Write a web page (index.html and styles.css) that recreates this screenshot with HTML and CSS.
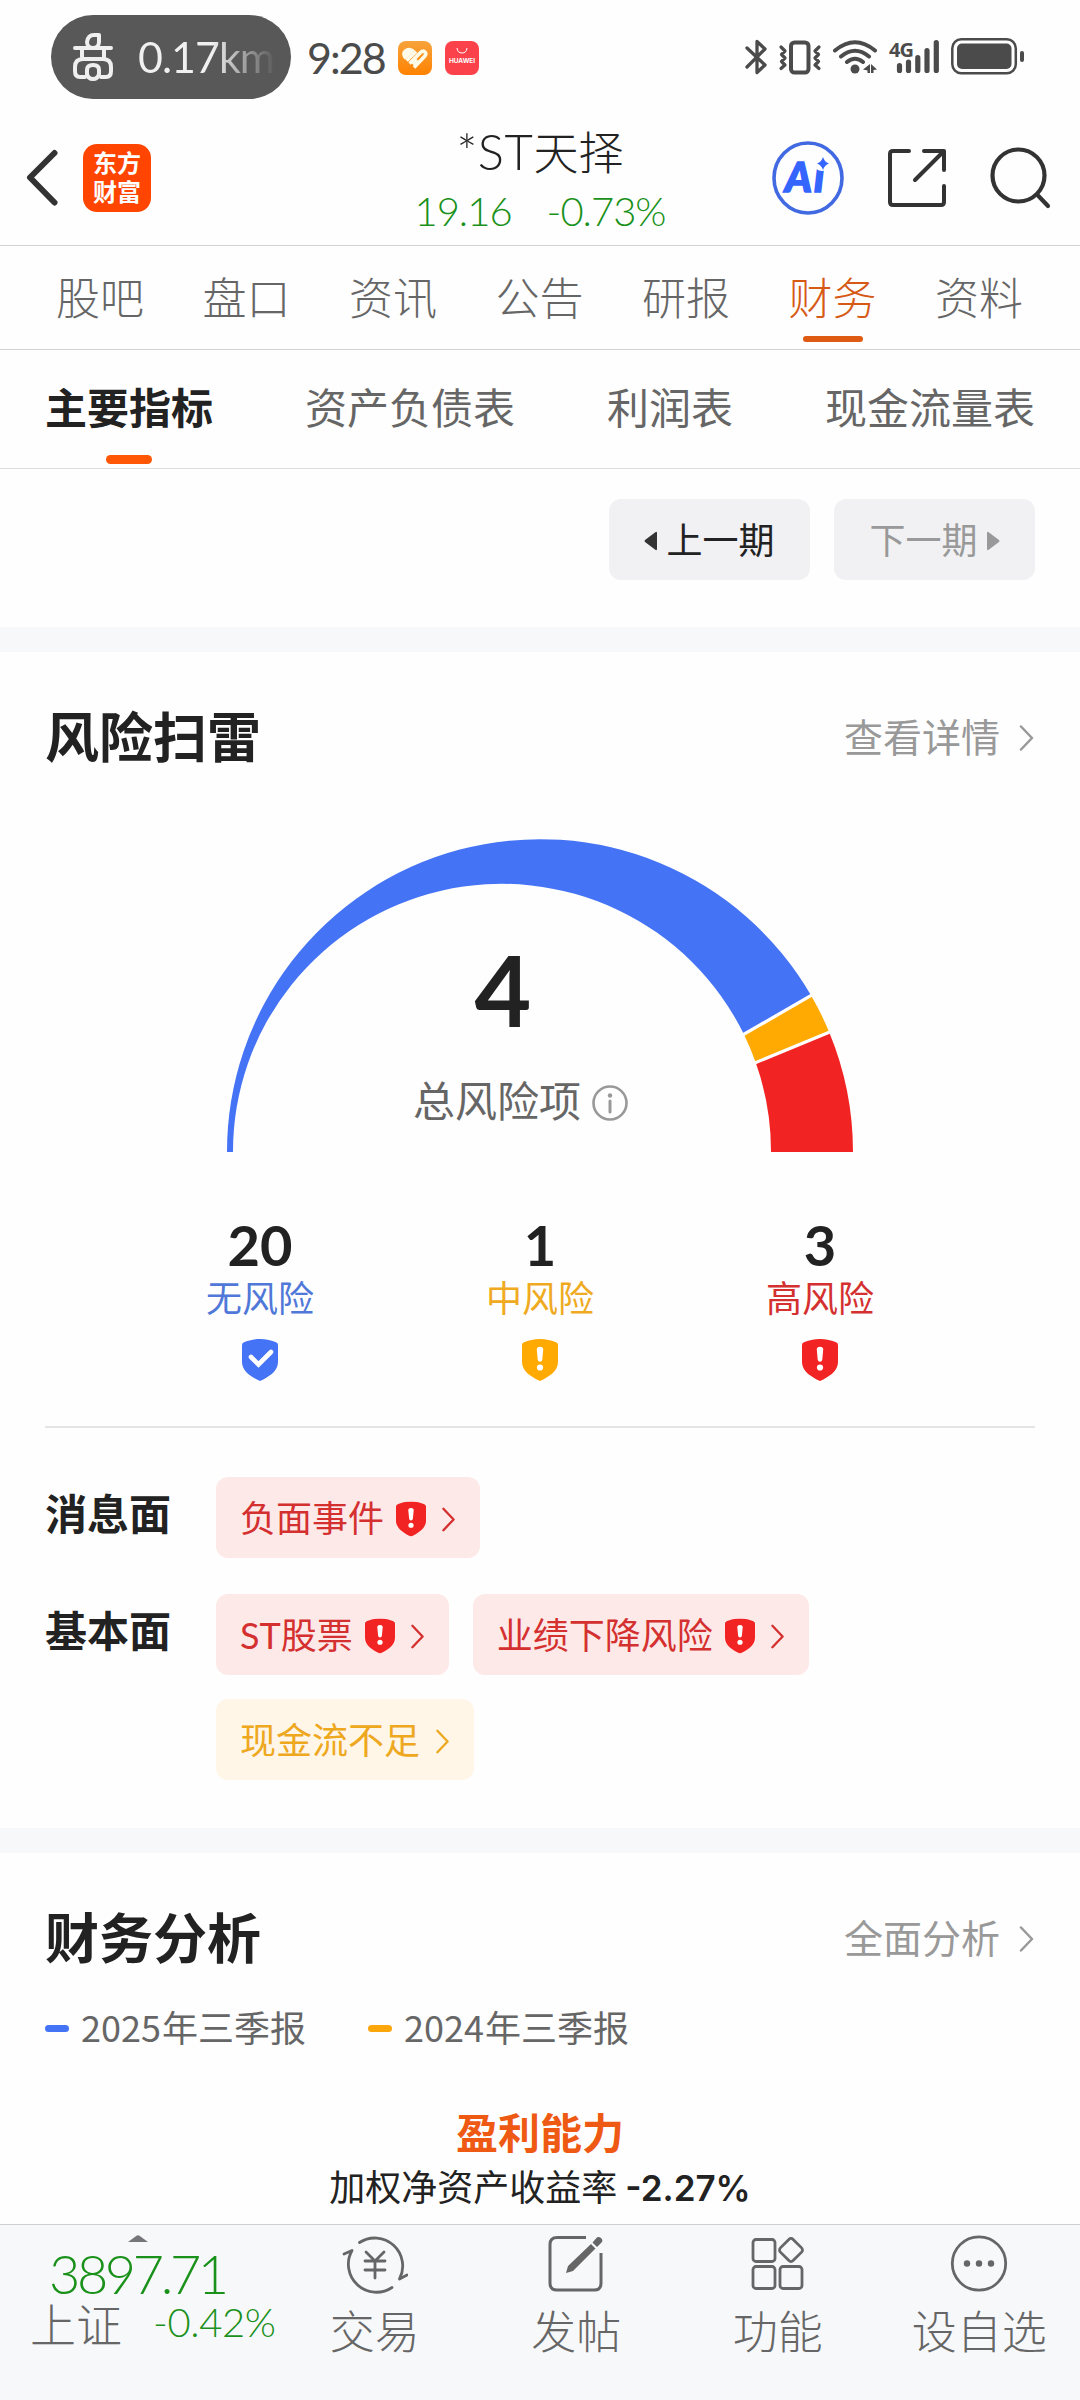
FILE: index.html
```html
<!DOCTYPE html>
<html lang="zh-CN">
<head>
<meta charset="utf-8">
<title>*ST天择 财务</title>
<link rel="stylesheet" href="styles.css">
</head>
<body>
<svg class="defs" width="0" height="0" aria-hidden="true">
  <symbol id="shield" viewBox="0 0 36 42"><path fill="currentColor" d="M18 0C24 0 30 1.500 34 3.200Q36 4 36 6V23C36 32 27 38 18 42C9 38 0 32 0 23V6Q0 4 2 3.200C6 1.500 12 0 18 0Z"/></symbol>
  <symbol id="bang" viewBox="0 0 36 42"><use href="#shield"/><path fill="#fff" d="M14.800 10.500Q14.800 7.800 18 7.800Q21.200 7.800 21.200 10.500L20.300 20.500Q20 22.800 18 22.800Q16 22.800 15.700 20.500Z"/><circle cx="18" cy="28.500" r="3.100" fill="#fff"/></symbol>
  <symbol id="arrow" viewBox="0 0 14 26"><path d="M1.500 1.500L12.500 13L1.500 24.500" fill="none" stroke="currentColor" stroke-width="2.500" stroke-linecap="round" stroke-linejoin="round"/></symbol>
</svg>

<header class="status">
  <div class="pill">
    <svg width="40" height="48" viewBox="0 0 40 48" fill="none" stroke="#efefef" stroke-width="4" stroke-linecap="round" stroke-linejoin="round">
      <path d="M14 9Q15 2 21 2H26V9A6 6 0 0 1 14 9ZM2 15H13M27 15H38M9 17V24M31 17V24M13 15H27"/>
      <path d="M12 44H7Q2 44 2 38V34Q2 26 10 26H30Q38 26 38 34V38Q38 44 33 44H28"/>
      <path d="M14 41V37Q14 32 20 32Q26 32 26 37V41Q25 46 20 46Q15 46 14 41Z"/>
    </svg>
    <span class="num distance">0.17km</span>
  </div>
  <span class="num clock">9:28</span>
  <svg class="app-mini" width="34" height="34" viewBox="0 0 34 34"><defs><linearGradient id="og" x2="0" y2="1"><stop stop-color="#f7a33c"/><stop offset="1" stop-color="#ff8200"/></linearGradient></defs><rect width="34" height="34" rx="8" fill="url(#og)"/><path fill="#fffbe9" d="M17 9.500Q13 5.500 8 7.500Q3 10 4.500 15Q5 17 7 18.500Z"/><path d="M8.500 19.500L18 10.500M11.500 22.500L22.500 11.500Q25 9 27 11Q29 13 26.500 15.500L16 26.500M14.500 23L19 18.500" fill="none" stroke="#fffbe9" stroke-width="3.600"/></svg>
  <svg class="app-mini" width="34" height="34" viewBox="0 0 34 34"><rect width="34" height="34" rx="8" fill="#fb414a"/><path d="M12 7Q12.500 12 17 12T22 7" fill="none" stroke="#fff" stroke-width="1"/><text x="17" y="22" text-anchor="middle" textLength="26" class="mini-text">HUAWEI</text></svg>
  <div class="status-right">
    <svg width="280" height="40" viewBox="745 36 280 40" fill="none" stroke="#4b4b4b" stroke-linecap="round" stroke-linejoin="round">
      <path stroke-width="3.300" d="M747 48L765 65L757 72.500V41.500L765 49L747 67"/>
      <rect x="791" y="42.500" width="17.500" height="30" rx="3.500" stroke-width="4"/>
      <path stroke-width="3.200" d="M781 47L785 51L781.500 54.500L785 58L781.500 61.500L785 65L781 68.500M819 47L815 51L818.500 54.500L815 58L818.500 61.500L815 65L819 68.500"/>
      <path stroke-width="4" d="M835 50.500Q855 34 875 50.500M841 56.500Q855 45 869 56.500M847 62Q855 55.500 863 62"/>
      <circle cx="855" cy="69" r="4.500" fill="#4b4b4b" stroke="none"/>
      <path fill="#4b4b4b" stroke="none" d="M863 69.500L870 64V73H867.500V70.500ZM871 64L877 69.500L873.500 70V73H871Z"/>
      <path stroke-width="5.200" d="M899.500 65.500V70.500M908.500 62V70.500M917.800 57.500V70.500M927 50.500V70.500M936.300 42.500V70.500"/>
      <rect x="952.300" y="39.300" width="63.500" height="34" rx="9" stroke-width="2.500"/>
      <rect x="957" y="43.500" width="54.500" height="25.500" rx="5" fill="#4b4b4b" stroke="none"/>
      <rect x="1020" y="51" width="4" height="11" rx="2" fill="#4b4b4b" stroke="none"/>
      <text x="889" y="56.500" class="net-text">4G</text>
    </svg>
  </div>
</header>

<header class="topbar">
  <div class="top-left">
    <svg width="32" height="58" viewBox="0 0 32 58"><path d="M28.500 4L4 28.500L28.500 53.500" fill="none" stroke="#333" stroke-width="6" stroke-linecap="round" stroke-linejoin="round"/></svg>
    <div class="brand">东方<br>财富</div>
  </div>
  <div class="stock">
    <div class="name"><span class="num latin">*ST</span>天择</div>
    <div class="quote num"><span>19.16</span><span>-0.73%</span></div>
  </div>
  <div class="top-right">
    <svg width="72" height="74" viewBox="0 0 72 74"><ellipse cx="36" cy="37" rx="34" ry="35" fill="none" stroke="#4169e1" stroke-width="3.600"/><text x="13" y="51" class="ai-text">Ai</text><circle cx="50" cy="22" r="8" fill="#fefefe"/><path fill="#3565ff" d="M51 16Q52.500 21 57 22.500Q52.500 24 51 29Q49.500 24 45 22.500Q49.500 21 51 16Z"/></svg>
    <svg width="60" height="60" viewBox="0 0 60 60" fill="none" stroke="#333" stroke-width="4" stroke-linecap="round" stroke-linejoin="round"><path d="M22 3H6Q3 3 3 6V54Q3 57 6 57H54Q57 57 57 54V38M37 3H57V22M56 4L28 32"/></svg>
    <svg width="62" height="62" viewBox="0 0 62 62" fill="none" stroke="#333" stroke-width="4.200" stroke-linecap="round"><circle cx="28.500" cy="28.500" r="26"/><path d="M47.500 48L58 59"/></svg>
  </div>
</header>

<nav class="tabs">
  <span>股吧</span><span>盘口</span><span>资讯</span><span>公告</span><span>研报</span><span class="on">财务</span><span>资料</span>
</nav>
<nav class="subtabs">
  <span class="on">主要指标</span><span>资产负债表</span><span>利润表</span><span>现金流量表</span>
</nav>
<div class="pager">
  <button class="prev"><svg width="13" height="20" viewBox="0 0 13 20"><path d="M13 2V18Q13 20 11 18.500L1 11Q0 10 1 9L11 1.500Q13 0 13 2Z" fill="#333"/></svg><span>上一期</span></button>
  <button class="next"><span>下一期</span><svg width="13" height="20" viewBox="0 0 13 20"><path d="M0 2V18Q0 20 2 18.500L12 11Q13 10 12 9L2 1.500Q0 0 0 2Z" fill="#999"/></svg></button>
</div>

<section class="risk">
  <div class="head"><h2>风险扫雷</h2><a>查看详情<svg width="15" height="26"><use href="#arrow"/></svg></a></div>
  <div class="gauge">
    <svg width="630" height="316" viewBox="225 836 630 316">
      <path fill="#4573f5" d="M227 1151A313 312.500 0 0 1 811.100 994.500L743.900 1033.300A269 267.500 0 0 0 233 1151Z"/>
      <path fill="#ffaa02" d="M811.100 994.500A313 313 0 0 1 829.200 1031.200L755.700 1061.600A269 267.500 0 0 0 743.900 1033.300Z"/>
      <path fill="#f22323" d="M829.200 1031.200A313 313 0 0 1 853 1151H771A269 267.500 0 0 0 755.700 1061.600Z"/>
      <path stroke="#fff" stroke-width="3.200" d="M738 1036.700L816 991.700M750 1063.900L834 1029.200"/>
    </svg>
    <div class="gauge-text">
      <div class="total num">4</div>
      <div class="total-label">总风险项<svg width="36" height="36" viewBox="0 0 36 36"><circle cx="18" cy="18" r="16.500" fill="none" stroke="#999" stroke-width="2.600"/><circle cx="18" cy="10.500" r="2.200" fill="#999"/><path d="M18 16V27" stroke="#999" stroke-width="3" stroke-linecap="round"/></svg></div>
    </div>
  </div>
  <div class="counts">
    <div class="count blue"><b class="num">20</b><span>无风险</span><svg width="36" height="42" viewBox="0 0 36 42"><use href="#shield"/><path d="M9 18L16.500 25.500L29 13" fill="none" stroke="#fff" stroke-width="4.600" stroke-linecap="round"/></svg></div>
    <div class="count amber"><b class="num">1</b><span>中风险</span><svg width="36" height="42"><use href="#bang"/></svg></div>
    <div class="count red"><b class="num">3</b><span>高风险</span><svg width="36" height="42"><use href="#bang"/></svg></div>
  </div>
  <div class="factors">
    <div class="factor"><h3>消息面</h3><div class="tags">
      <a class="tag"><span>负面事件</span><svg class="sh" width="30" height="36"><use href="#bang"/></svg><svg class="ar" width="13" height="25"><use href="#arrow"/></svg></a>
    </div></div>
    <div class="factor"><h3>基本面</h3><div class="tags">
      <a class="tag"><span><span class="num">ST</span>股票</span><svg class="sh" width="30" height="36"><use href="#bang"/></svg><svg class="ar" width="13" height="25"><use href="#arrow"/></svg></a>
      <a class="tag"><span>业绩下降风险</span><svg class="sh" width="30" height="36"><use href="#bang"/></svg><svg class="ar" width="13" height="25"><use href="#arrow"/></svg></a>
      <a class="tag warn"><span>现金流不足</span><svg class="ar" width="13" height="25"><use href="#arrow"/></svg></a>
    </div></div>
  </div>
</section>

<section class="analysis">
  <div class="head"><h2>财务分析</h2><a>全面分析<svg width="15" height="26"><use href="#arrow"/></svg></a></div>
  <div class="legend">
    <span class="key blue"><i></i><em>2025</em>年三季报</span>
    <span class="key amber"><i></i><em>2024</em>年三季报</span>
  </div>
  <h4>盈利能力</h4>
  <p>加权净资产收益率 <b>-2.27%</b></p>
</section>

<footer class="dock">
  <div class="index">
    <svg width="20" height="7" viewBox="0 0 20 7"><path d="M0 7L8.500 .8Q10 -.3 11.500 .8L20 7Z" fill="#77777b"/></svg>
    <div class="points num">3897.71</div>
    <div class="change"><span>上证</span><span class="pct num">-0.42%</span></div>
  </div>
  <div class="item"><svg width="66" height="60" viewBox="0 0 66 60" fill="none" stroke="#666" stroke-width="2.800" stroke-linecap="round" stroke-linejoin="round"><path d="M17.500 8.500A28 28 0 0 1 57.500 45L65 41M2 20L10 16.500A28 28 0 0 0 50 53.500"/><path d="M24 18L33 27L42 18M23 27H43M23 36H43M33 27V44"/></svg><span>交易</span></div>
  <div class="item"><svg width="56" height="60" viewBox="0 0 56 60"><path d="M38 3.500H9Q2 3.500 2 10.500V49Q2 56 9 56H46.500Q53 56 53 49V19" fill="none" stroke="#666" stroke-width="3"/><path fill="#666" d="M18 39L20 32L43 10L47.500 14.500L25 37ZM44.500 8.500L48 4.500Q50 2 53 4Q55.500 6.500 53.500 8.500L49 13Z"/></svg><span>发帖</span></div>
  <div class="item"><svg width="54" height="60" viewBox="0 0 54 60" fill="none" stroke="#666" stroke-width="2.800"><rect x="2" y="5.500" width="22" height="22" rx="3"/><rect x="2" y="32.500" width="22" height="22" rx="3"/><rect x="29" y="32.500" width="22" height="22" rx="3"/><rect x="31" y="7" width="18" height="18" rx="3" transform="rotate(45 40 16)"/></svg><span>功能</span></div>
  <div class="item"><svg width="58" height="60" viewBox="0 0 58 60"><circle cx="29" cy="29.500" r="26.700" fill="none" stroke="#666" stroke-width="2.800"/><g fill="#666"><circle cx="17" cy="29.500" r="3.200"/><circle cx="29" cy="29.500" r="3.200"/><circle cx="41" cy="29.500" r="3.200"/></g></svg><span>设自选</span></div>
</footer>
</body>
</html>
```

FILE: styles.css
```css
* { box-sizing: border-box; margin: 0; padding: 0; }
body {
  width: 1080px;
  height: 2400px;
  overflow: hidden;
  background: #fefefe;
  color: #222;
  font-family: "Noto Sans CJK SC", sans-serif;
  display: flex;
  flex-direction: column;
}
.defs { display: none; }
svg { display: block; flex: none; }
.num { font-family: Lato, "Noto Sans CJK SC", sans-serif; }

/* status bar */
.status { height: 114px; flex: none; padding: 15px 55px 0 51px; display: flex; align-items: flex-start; }
.pill {
  width: 240px; height: 84px; border-radius: 42px; background: #585858;
  display: flex; align-items: center; padding: 0 0 0 22px; gap: 25px;
}
.distance {
  width: 142px; white-space: nowrap;
  font-size: 43px; font-weight: 400; line-height: 60px; letter-spacing: -1px;
  color: transparent; background: linear-gradient(90deg, #f0f0f0 52%, #585858 97%);
  background-clip: text; -webkit-background-clip: text;
}
.clock { margin: 13px 0 0 16px; width: 91px; font-size: 43px; line-height: 60px; color: #4b4b4b; white-space: nowrap; letter-spacing: -2px; }
.app-mini { margin: 26px 13px 0 0; }
.mini-text { font: 700 6.500px Inter, sans-serif; fill: #fff; }
.status-right { margin: 21px 0 0 auto; }
.net-text { font: 700 20px "Open Sans", sans-serif; fill: #4b4b4b; stroke: none; letter-spacing: -1px; }

/* title bar */
.topbar {
  height: 132px; flex: none; border-bottom: 1px solid #d2d2d2;
  display: grid; grid-template-columns: 1fr 300px 1fr; align-items: start;
}
.top-left { display: flex; align-items: center; gap: 25px; padding: 30px 0 0 26px; }
.brand {
  width: 68px; height: 68px; border-radius: 14px; background: #ff4500; color: #fff;
  font-size: 24px; font-weight: 700; line-height: 29px; padding-top: 3px; text-align: center;
}
.stock { text-align: center; padding-top: 8px; }
.name { font-size: 45px; font-weight: 300; line-height: 58px; height: 58px; white-space: nowrap; }
.latin { font-size: 49px; line-height: 58px; letter-spacing: 0.5px; }
.quote { display: flex; justify-content: center; gap: 35px; margin-top: 2px; color: #1a911a; font-size: 40px; line-height: 58px; font-weight: 300; letter-spacing: -1px; }
.top-right { display: flex; align-items: center; justify-content: flex-end; gap: 43px; padding: 27px 28px 0 0; }
.ai-text { font: italic 900 41px Lato, sans-serif; fill: #3565ff; stroke: #3565ff; stroke-width: 1.500px; letter-spacing: 2px; }

/* tabs */
.tabs { height: 104px; flex: none; display: flex; justify-content: space-between; padding: 0 57px 0 56px; border-bottom: 1px solid #d2d2d2; }
.tabs span { font-size: 44px; font-weight: 300; line-height: 100px; color: #666; position: relative; }
.tabs .on { color: #d65a16; }
.tabs .on::after { content: ""; position: absolute; left: 14px; bottom: 7px; width: 60px; height: 6px; border-radius: 3px; background: #df5b13; }
.subtabs { height: 119px; flex: none; display: flex; justify-content: space-between; padding: 0 45px; border-bottom: 1px solid #ddd; }
.subtabs span { font-size: 42px; line-height: 112px; color: #666; position: relative; }
.subtabs .on { font-weight: 700; color: #222; }
.subtabs .on::after { content: ""; position: absolute; left: 61px; bottom: 4px; width: 46px; height: 9px; border-radius: 4.500px; background: #ff5706; }

/* report pager */
.pager { height: 158px; flex: none; display: flex; justify-content: flex-end; gap: 24px; padding: 30px 45px 0; }
.pager button {
  width: 201px; height: 81px; border: 0; border-radius: 12px; background: #f1f1f4;
  display: flex; align-items: center; justify-content: center; gap: 9px;
  font: 400 36px/78px "Noto Sans CJK SC", sans-serif; color: #222;
}
.pager span { padding-bottom: 3px; }
.pager svg { margin-top: 2px; }
.pager .next { color: #999; }

/* sections */
section { border-top: 25px solid #f7f8fa; flex: none; }
.head { display: flex; justify-content: space-between; align-items: center; height: 170px; padding: 0 46px 4px 45px; }
h2 { font-size: 54px; font-weight: 700; line-height: 80px; }
.head a { display: flex; align-items: center; gap: 19px; font-size: 39px; line-height: 60px; color: #999; }
.head a svg { margin-top: 6px; }
.risk { height: 1201px; }
.gauge { height: 330px; display: grid; justify-items: center; padding-top: 15px; }
.gauge > * { grid-area: 1 / 1; }
.gauge-text { width: 630px; padding-top: 102px; text-align: center; }
.total { font-size: 98px; font-weight: 700; line-height: 100px; padding-right: 74px; }
.total-label { display: flex; align-items: center; justify-content: center; gap: 11px; font-size: 42px; line-height: 60px; color: #666; padding: 30px 39px 0 0; }
.total-label svg { margin-top: 7px; }
.counts { display: flex; justify-content: space-between; padding: 63px 120px 0; margin: 0 45px; height: 276px; border-bottom: 2px solid #e5e5e5; }
.count { width: 190px; display: flex; flex-direction: column; align-items: center; }
.count b { font-size: 56px; line-height: 60px; color: #222; }
.count span { font-size: 36px; line-height: 50px; margin: -4px 0 18px; }
.count.blue { color: #4573f5; }
.count.blue span { color: #5078d8; }
.count.amber { color: #ffaa02; }
.count.amber span { color: #efaa22; }
.count.red { color: #f22323; }
.count.red span { color: #d43030; }
.factors { padding: 49px 45px 0; display: flex; flex-direction: column; gap: 36px; }
.factor { display: flex; }
h3 { width: 171px; flex: none; font-size: 42px; line-height: 69px; font-weight: 700; }
.tags { display: flex; flex-wrap: wrap; gap: 24px; }
.tag { display: flex; align-items: center; height: 81px; padding: 0 25px 0 24px; border-radius: 12px; background: #fde9e8; color: #d43030; font-size: 36px; }
.tag > span { padding-bottom: 4px; }
.tag .sh { margin-left: 12px; color: #f22323; margin-top: 2px; }
.tag .ar { margin-left: 16px; margin-top: 3px; }
.tag.warn { background: #fff6e8; color: #eea820; }

.analysis { height: 396px; }
.legend { display: flex; gap: 62px; padding-left: 45px; margin-top: -21px; font-size: 36px; line-height: 48px; color: #666; }
.key { display: flex; align-items: center; }
.key i { width: 24px; height: 7px; border-radius: 3.500px; margin: 4px 12px 0 0; background: #4573f5; }
.key em { font-style: normal; width: 81px; }
.key.amber i { background: #fba60a; }
h4 { margin-top: 51px; text-align: center; font-size: 42px; line-height: 60px; color: #ee5a14; }
p { text-align: center; font-size: 36px; line-height: 50px; margin-top: -1px; }
p b { font-family: Inter, sans-serif; font-size: 35px; font-weight: 600; }

/* bottom dock */
.dock { flex: 1; display: grid; grid-template-columns: 274px repeat(4, 201.500px); background: #f7f8fa; border-top: 1px solid #ccd0d4; }
.index { display: flex; flex-direction: column; padding-top: 10px; }
.index svg { margin-left: 128px; }
.points { font-size: 54px; font-weight: 300; line-height: 60px; margin: 2px 0 0 49px; color: #1a911a; letter-spacing: -3.400px; }
.change { display: flex; align-items: center; padding-left: 30px; margin-top: -5px; height: 46px; white-space: nowrap; font-size: 46px; font-weight: 300; color: #666; }
.pct { margin-left: 31px; font-size: 40px; color: #1a911a; letter-spacing: -0.400px; }
.item { display: flex; flex-direction: column; align-items: center; padding-top: 9px; color: #666; font-size: 45px; font-weight: 300; line-height: 72px; }
```
